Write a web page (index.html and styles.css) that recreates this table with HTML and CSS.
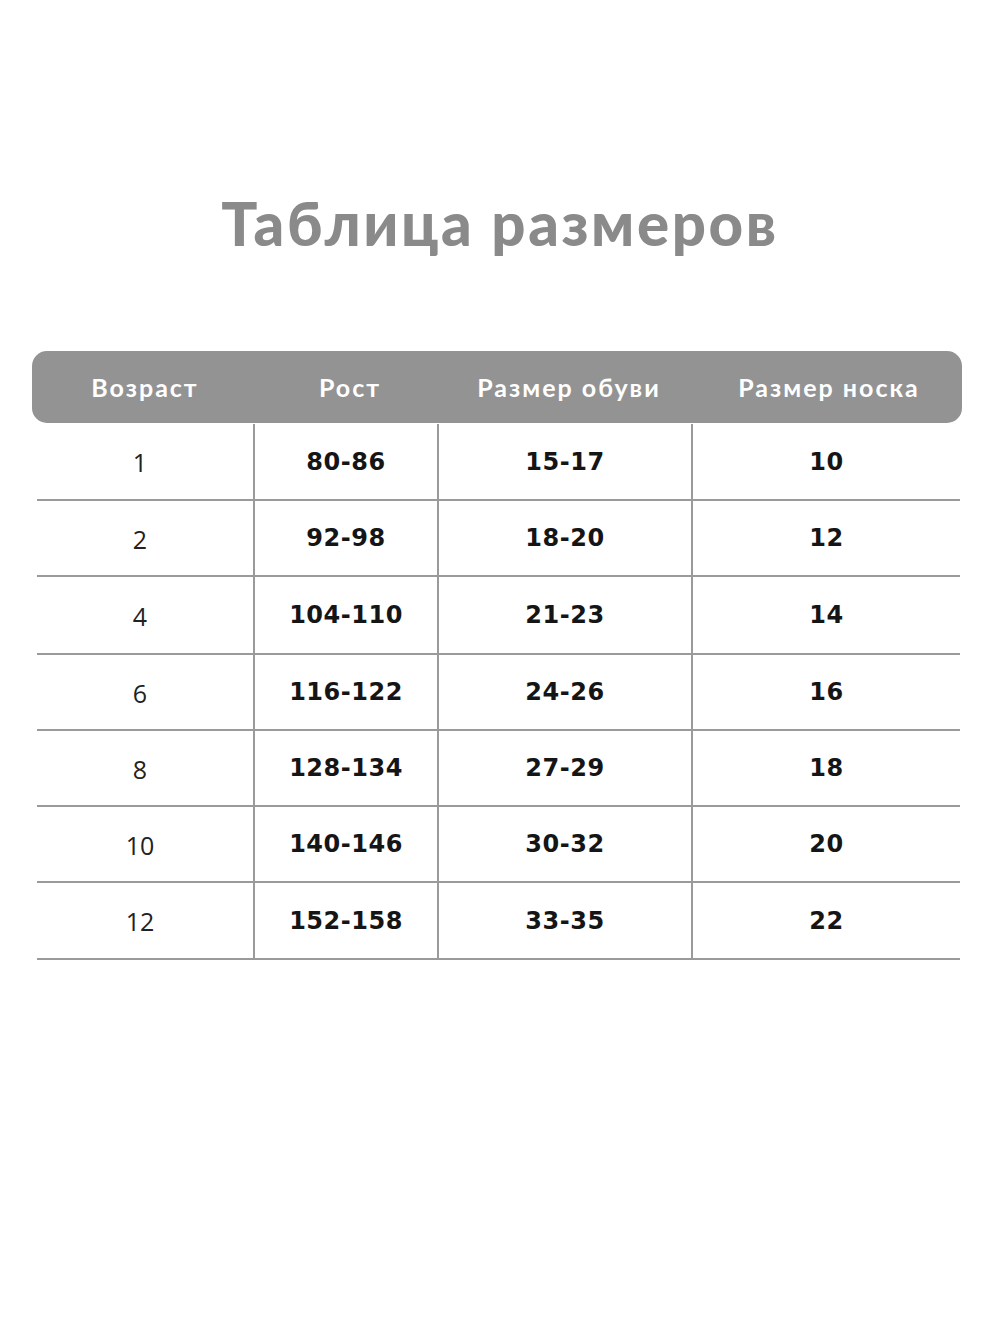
FILE: index.html
```html
<!DOCTYPE html>
<html lang="ru">
<head>
<meta charset="utf-8">
<title>Таблица размеров</title>
<link rel="stylesheet" href="styles.css">
</head>
<body>
<div class="page">
  <h1 class="title">Таблица размеров</h1>
  <div class="table">
    <div class="head">
      <div class="hcell">Возраст</div>
      <div class="hcell">Рост</div>
      <div class="hcell">Размер обуви</div>
      <div class="hcell">Размер носка</div>
    </div>
    <div class="body">
      <div class="row r1"><div class="cell age">1</div><div class="cell">80-86</div><div class="cell">15-17</div><div class="cell">10</div></div>
      <div class="row r2"><div class="cell age">2</div><div class="cell">92-98</div><div class="cell">18-20</div><div class="cell">12</div></div>
      <div class="row r3"><div class="cell age">4</div><div class="cell">104-110</div><div class="cell">21-23</div><div class="cell">14</div></div>
      <div class="row r4"><div class="cell age">6</div><div class="cell">116-122</div><div class="cell">24-26</div><div class="cell">16</div></div>
      <div class="row r5"><div class="cell age">8</div><div class="cell">128-134</div><div class="cell">27-29</div><div class="cell">18</div></div>
      <div class="row r6"><div class="cell age">10</div><div class="cell">140-146</div><div class="cell">30-32</div><div class="cell">20</div></div>
      <div class="row r7"><div class="cell age">12</div><div class="cell">152-158</div><div class="cell">33-35</div><div class="cell">22</div></div>
    </div>
  </div>
</div>
</body>
</html>
```
FILE: styles.css
```css
html, body {
  margin: 0;
  padding: 0;
  background: #ffffff;
}
.page {
  width: 1000px;
  height: 1333px;
  font-family: "Open Sans", "Noto Sans", sans-serif;
  padding-top: 190px;
  box-sizing: border-box;
}
.title {
  margin: 0;
  text-align: center;
  font-family: Lato, "Open Sans", sans-serif;
  font-size: 60px;
  line-height: 66px;
  font-weight: 900;
  color: #8a8a8a;
  letter-spacing: 2.6px;
}
.table {
  margin: 95px 38px 0 32px;
}
.head {
  display: grid;
  grid-template-columns: 226px 184px 254px 266px;
  height: 72px;
  background: #939393;
  border-radius: 15px;
  align-items: center;
}
.hcell {
  text-align: center;
  color: #ffffff;
  font-family: Lato, "Open Sans", sans-serif;
  font-weight: 700;
  font-size: 25px;
  letter-spacing: 2px;
}
.body {
  margin: 1px 2px 0 5px;
}
.row {
  display: grid;
  grid-template-columns: 218px 184px 254px 267px;
  height: 77px;
  border-bottom: 2px solid #9a9a9a;
  box-sizing: border-box;
}
.r2 { height: 76px; }
.r3 { height: 78px; }
.r4, .r5, .r6 { height: 76px; }
.cell {
  display: flex;
  align-items: center;
  justify-content: center;
  font-family: "DejaVu Sans", "Open Sans", sans-serif;
  font-size: 24px;
  font-weight: 700;
  color: #151515;
  letter-spacing: 0.5px;
  border-right: 2px solid #9a9a9a;
}
.cell:last-child {
  border-right: none;
}
.cell.age {
  font-family: "Open Sans", sans-serif;
  font-size: 25px;
  font-weight: 400;
  letter-spacing: 0;
  color: #222222;
  padding: 1px 10px 0 0;
}
```
